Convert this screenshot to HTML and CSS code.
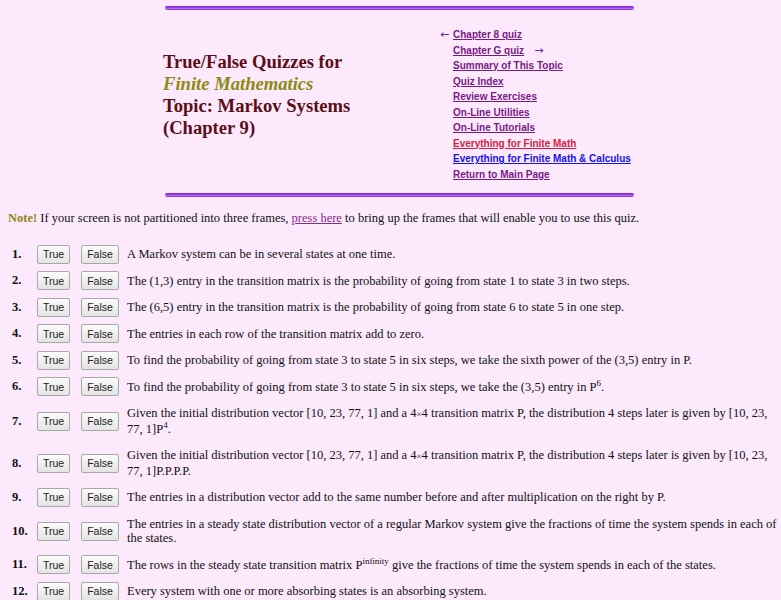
FILE: index.html
```html
<!DOCTYPE html>
<html>
<head>
<meta charset="utf-8">
<link rel="stylesheet" href="styles.css">
</head>
<body>
<div class="rule"></div>
<div class="header">
  <div class="title">
    True/False Quizzes for<br>
    <span class="olive">Finite Mathematics</span><br>
    Topic: Markov Systems<br>
    (Chapter 9)
  </div>
  <div class="links">
    <div class="link"><span class="arrow left">&larr;</span><a href="#" class="v">Chapter 8 quiz</a></div>
    <div class="link"><a href="#" class="v">Chapter G quiz</a><span class="arrow right">&rarr;</span></div>
    <div class="link"><a href="#" class="v">Summary of This Topic</a></div>
    <div class="link"><a href="#" class="v">Quiz Index</a></div>
    <div class="link"><a href="#" class="v">Review Exercises</a></div>
    <div class="link"><a href="#" class="v">On-Line Utilities</a></div>
    <div class="link"><a href="#" class="v">On-Line Tutorials</a></div>
    <div class="link"><a href="#" class="red">Everything for Finite Math</a></div>
    <div class="link"><a href="#" class="blue">Everything for Finite Math &amp; Calculus</a></div>
    <div class="link"><a href="#" class="v">Return to Main Page</a></div>
  </div>
</div>
<div class="rule rule2"></div>
<p class="note"><b class="olive">Note!</b> If your screen is not partitioned into three frames, <a href="#" class="press">press here</a> to bring up the frames that will enable you to use this quiz.</p>
<div class="quiz">
  <div class="num">1.</div><div class="btns"><button>True</button><button>False</button></div><div class="q">A Markov system can be in several states at one time.</div>
  <div class="num">2.</div><div class="btns"><button>True</button><button>False</button></div><div class="q">The (1,3) entry in the transition matrix is the probability of going from state 1 to state 3 in two steps.</div>
  <div class="num">3.</div><div class="btns"><button>True</button><button>False</button></div><div class="q">The (6,5) entry in the transition matrix is the probability of going from state 6 to state 5 in one step.</div>
  <div class="num">4.</div><div class="btns"><button>True</button><button>False</button></div><div class="q">The entries in each row of the transition matrix add to zero.</div>
  <div class="num">5.</div><div class="btns"><button>True</button><button>False</button></div><div class="q">To find the probability of going from state 3 to state 5 in six steps, we take the sixth power of the (3,5) entry in P.</div>
  <div class="num">6.</div><div class="btns"><button>True</button><button>False</button></div><div class="q">To find the probability of going from state 3 to state 5 in six steps, we take the (3,5) entry in P<sup>6</sup>.</div>
  <div class="num">7.</div><div class="btns"><button>True</button><button>False</button></div><div class="q">Given the initial distribution vector [10, 23, 77, 1] and a 4<span class="times">&times;</span>4 transition matrix P, the distribution 4 steps later is given by [10, 23, 77, 1]P<sup>4</sup>.</div>
  <div class="num">8.</div><div class="btns"><button>True</button><button>False</button></div><div class="q">Given the initial distribution vector [10, 23, 77, 1] and a 4<span class="times">&times;</span>4 transition matrix P, the distribution 4 steps later is given by [10, 23, 77, 1]P.P.P.P.</div>
  <div class="num">9.</div><div class="btns"><button>True</button><button>False</button></div><div class="q">The entries in a distribution vector add to the same number before and after multiplication on the right by P.</div>
  <div class="num">10.</div><div class="btns"><button>True</button><button>False</button></div><div class="q">The entries in a steady state distribution vector of a regular Markov system give the fractions of time the system spends in each of the states.</div>
  <div class="num">11.</div><div class="btns"><button>True</button><button>False</button></div><div class="q">The rows in the steady state transition matrix P<sup>infinity</sup> give the fractions of time the system spends in each of the states.</div>
  <div class="num">12.</div><div class="btns"><button>True</button><button>False</button></div><div class="q">Every system with one or more absorbing states is an absorbing system.</div>
</div>
</body>
</html>
```
FILE: styles.css
```css
html, body {
  background: #fce9fc;
}
body {
  margin: 0;
  padding: 6px 3px 0 8px;
  font-family: "Liberation Serif", "Times New Roman", serif;
  font-size: 12.5px;
  color: #111;
}
.rule {
  margin-left: 157px;
  width: 469px;
  height: 4px;
  border-radius: 2px;
  background: linear-gradient(to bottom, #7a20d8 0%, #9a40e0 45%, #c080f0 70%, #6a10c8 100%);
}
.rule2 {
  margin-top: 11px;
}
.header {
  display: flex;
  align-items: center;
  margin-left: 155px;
  margin-top: 17px;
}
.title {
  width: 277px;
  font-weight: bold;
  font-size: 18.6px;
  line-height: 22px;
  color: #5c0e16;
  padding-bottom: 20px;
}
.olive {
  color: #8c8a12;
}
.title .olive {
  font-style: italic;
}
.links {
  font-family: "Liberation Sans", Arial, sans-serif;
  font-weight: bold;
  font-size: 10px;
  line-height: 15.5px;
  padding-left: 13px;
  position: relative;
}
.link a {
  text-decoration: underline;
}
a.v { color: #7a1a84; }
a.red { color: #d8203e; }
a.blue { color: #1414e8; }
.arrow {
  font-family: "DejaVu Sans", sans-serif;
  font-weight: normal;
  color: #6a2ab0;
  font-size: 11px;
}
.arrow.left {
  position: absolute;
  left: 0;
}
.arrow.right {
  margin-left: 10px;
}
.note {
  margin: 13px 0 0 0;
  line-height: 16px;
}
.note b {
  color: #8c8a12;
}
a.press {
  color: #8a2a8a;
}
.quiz {
  display: grid;
  grid-template-columns: 29px 90px 1fr;
  margin-top: 15px;
}
.num {
  font-weight: bold;
  padding-left: 4px;
  display: flex;
  align-items: center;
}
.btns {
  display: flex;
  align-items: center;
  gap: 11px;
}
.q {
  line-height: 14.5px;
  padding: 6px 0;
}
button {
  font-family: "Liberation Sans", Arial, sans-serif;
  font-size: 10.5px;
  color: #222;
  height: 19px;
  padding: 0 5px;
  border: 1px solid #a8a8a8;
  border-radius: 2px;
  background: linear-gradient(to bottom, #fbfbfb, #e4e4e4);
  margin: 0;
}
sup {
  font-size: 9px;
  line-height: 0;
  vertical-align: 5px;
}
.times {
  font-size: 9px;
}
```
